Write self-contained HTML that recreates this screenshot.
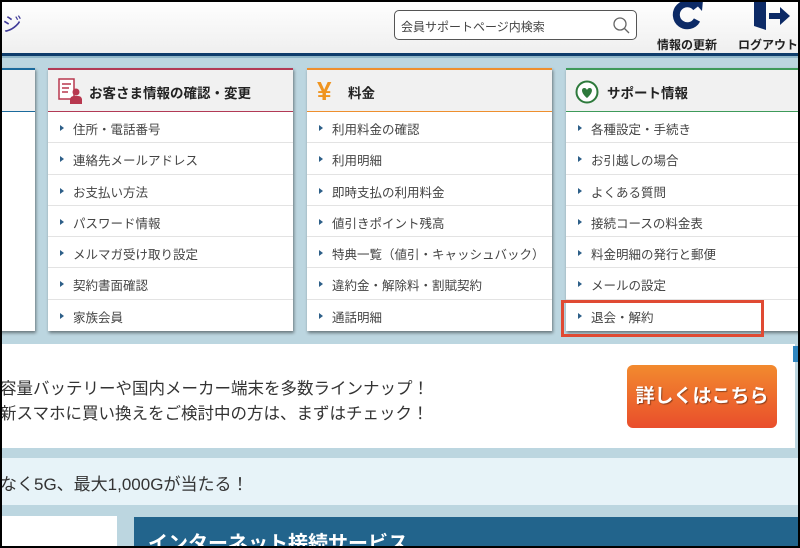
<!DOCTYPE html>
<html><head><meta charset="utf-8"><style>
*{margin:0;padding:0;box-sizing:border-box}
body{width:800px;height:548px;overflow:hidden;position:relative;background:#bcd6e0;font-family:"Liberation Sans","Noto Sans CJK JP",sans-serif;}
.frame{position:absolute;inset:0;border:2px solid #000;z-index:50;pointer-events:none}
.hdr{position:absolute;left:0;top:0;width:800px;height:53px;background:linear-gradient(#fff,#efefef)}
.line{position:absolute;left:0;top:53px;width:800px;height:3px;background:#0f3d6c}
.line2{position:absolute;left:0;top:56px;width:800px;height:2px;background:#8fb6c8}
.logo{position:absolute;left:2px;top:8px;font-size:20px;color:#3f3a98}
.search{position:absolute;left:394px;top:10px;width:243px;height:30px;border:1px solid #555;border-radius:5px;background:#fff;font-size:12px;color:#444;padding:7px 0 0 6px}
.hi{position:absolute;font-size:12px;font-weight:bold;color:#222;top:36px}
.card{position:absolute;top:68px;height:263px;background:#fff;box-shadow:1px 2px 3px rgba(0,0,0,.45)}
.card .h{height:44px;background:#f1f1f1;border-top:2px solid;border-bottom:1px solid #ddd;font-size:13.5px;font-weight:bold;color:#222;padding:12px 0 0 41px;position:relative}
.card .it{height:31.3px;border-bottom:1px solid #e3e3e3;font-size:12.5px;color:#444;padding:7px 0 0 25px;position:relative}
.card .it:before{content:"";position:absolute;left:12px;top:13px;border-left:4px solid #2d5f88;border-top:3px solid transparent;border-bottom:3px solid transparent}
.card .it:last-child{border-bottom:none}
.ad{position:absolute;left:0;top:344px;width:795px;height:104px;background:#fff}
.ad p{position:absolute;left:0;font-size:16.5px;color:#333;white-space:nowrap}
.btn{position:absolute;left:627px;top:21px;width:150px;height:63px;border-radius:6px;background:linear-gradient(#f28a2e,#e94e2c);color:#fff;font-weight:bold;font-size:19px;text-align:center;line-height:63px;text-shadow:1px 1px 1px rgba(0,0,0,.4);white-space:nowrap}
.bar{position:absolute;left:0;top:458px;width:800px;height:47px;background:#e7f3f8;font-size:17px;color:#333;padding:12px 0 0 0}
</style></head><body>
<div class="frame"></div>
<div class="hdr"></div><div class="line"></div><div class="line2"></div>
<div class="logo">ジ</div>
<div class="search">会員サポートページ内検索
<svg style="position:absolute;right:6px;top:5px" width="18" height="18" viewBox="0 0 18 18"><circle cx="8" cy="8" r="6" fill="none" stroke="#666" stroke-width="1.3"/><path d="M12.5 12.5L17 17" stroke="#666" stroke-width="1.3"/></svg></div>
<svg style="position:absolute;left:672px;top:0" width="34" height="30" viewBox="0 0 34 30"><path d="M24 8A11 11 0 1 0 25 20" fill="none" stroke="#0c2a66" stroke-width="7"/><path d="M20 0L31 0L30 11Z" fill="#0c2a66"/></svg>
<div class="hi" style="left:657px">情報の更新</div>
<svg style="position:absolute;left:752px;top:0" width="40" height="30" viewBox="0 0 40 30"><path d="M2 0H14V30L2 26Z" fill="#0c2a66"/><path d="M17 13H28V7L38 16L28 25V19H17Z" fill="#0c2a66"/></svg>
<div class="hi" style="left:738px">ログアウト</div>

<div class="card" style="left:-10px;width:45px"><div class="h" style="border-color:#1b6a9c"></div></div>
<div class="card" style="left:48px;width:245px">
<div class="h" style="border-color:#b23a55">
<svg style="position:absolute;left:10px;top:8px" width="24" height="26" viewBox="0 0 24 26"><rect x="1" y="1" width="15" height="20" fill="#fff" stroke="#b8384f" stroke-width="1.5"/><path d="M4 6h9M4 10h7M4 14h6" stroke="#b8384f" stroke-width="1.5"/><circle cx="18" cy="14" r="3.5" fill="#b8384f"/><path d="M12 26v-5a4 4 0 0 1 4-3h4a4 4 0 0 1 4 3v5z" fill="#b8384f"/></svg>お客さま情報の確認・変更</div>
<div class="it">住所・電話番号</div><div class="it">連絡先メールアドレス</div><div class="it">お支払い方法</div><div class="it">パスワード情報</div><div class="it">メルマガ受け取り設定</div><div class="it">契約書面確認</div><div class="it">家族会員</div></div>
<div class="card" style="left:307px;width:245px">
<div class="h" style="border-color:#ee8f2e"><span style="position:absolute;left:10px;top:6px;color:#ef9420;font-size:26px;font-weight:bold">¥</span>料金</div>
<div class="it">利用料金の確認</div><div class="it">利用明細</div><div class="it">即時支払の利用料金</div><div class="it">値引きポイント残高</div><div class="it">特典一覧（値引・キャッシュバック）</div><div class="it">違約金・解除料・割賦契約</div><div class="it">通話明細</div></div>
<div class="card" style="left:566px;width:245px">
<div class="h" style="border-color:#3e9a5a">
<svg style="position:absolute;left:9px;top:10px" width="24" height="24" viewBox="0 0 24 24"><circle cx="12" cy="12" r="10.5" fill="#fff" stroke="#2e7a3c" stroke-width="2"/><path d="M12 18C6 13 6 8.5 9 8c1.5-.2 2.5.8 3 2 .5-1.2 1.5-2.2 3-2 3 .5 3 5-3 10z" fill="#2e7a3c"/></svg>サポート情報</div>
<div class="it">各種設定・手続き</div><div class="it">お引越しの場合</div><div class="it">よくある質問</div><div class="it">接続コースの料金表</div><div class="it">料金明細の発行と郵便</div><div class="it">メールの設定</div><div class="it">退会・解約</div></div>
<div style="position:absolute;left:561px;top:300px;width:203px;height:37px;border:3px solid #e04a33;z-index:5"></div>

<div class="ad"><p style="top:31px">容量バッテリーや国内メーカー端末を多数ラインナップ！</p><p style="top:56px">新スマホに買い換えをご検討中の方は、まずはチェック！</p><div class="btn">詳しくはこちら</div></div>
<div style="position:absolute;left:793px;top:346px;width:7px;height:16px;background:#2f86c0"></div>
<div class="bar">なく5G、最大1,000Gが当たる！</div>
<div style="position:absolute;left:0;top:516px;width:117px;height:32px;background:#fff"></div>
<div style="position:absolute;left:134px;top:517px;width:666px;height:31px;background:#22648c;color:#fff;font-size:20px;font-weight:bold;padding:10px 0 0 14px;overflow:hidden;white-space:nowrap">インターネット接続サービス</div>
</body></html>
